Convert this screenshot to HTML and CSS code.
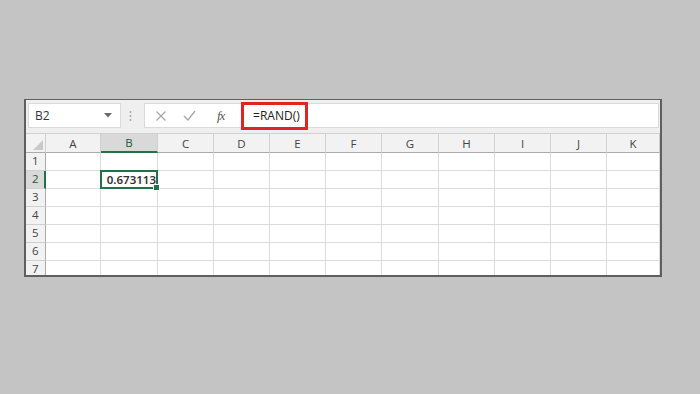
FILE: index.html
```html
<!DOCTYPE html>
<html lang="en">
<head>
    <meta charset="UTF-8">
    <title>RAND</title>
    <link rel="stylesheet" href="styles.css">
</head>
<body>
    <div class="window">
        <div class="toolbar">
            <div class="name-box">
                <span>B2</span>
                <svg class="arrow" width="8" height="5" viewBox="0 0 8 5"><path d="M0 0h8L4 4.5z" fill="#6a6a6a"/></svg>
            </div>
            <div class="dots">
                <svg width="3" height="12" viewBox="0 0 3 12"><circle cx="1.5" cy="2" r="0.9" fill="#a0a0a0"/><circle cx="1.5" cy="6" r="0.9" fill="#a0a0a0"/><circle cx="1.5" cy="10" r="0.9" fill="#a0a0a0"/></svg>
            </div>
            <div class="formula-box">
                <svg class="btn-x" width="12" height="12" viewBox="0 0 12 12"><path d="M1.5 1.5l9 9M10.5 1.5l-9 9" stroke="#a8a8a8" stroke-width="1.3"/></svg>
                <svg class="btn-ok" width="13" height="11" viewBox="0 0 13 11"><path d="M1 6l4 4L12 1" stroke="#a8a8a8" stroke-width="1.4" fill="none"/></svg>
                <span class="fx">fx</span>
                <span class="formula">=RAND()</span>
            </div>
        </div>

        <div class="sheet">
            <div class="corner">
                <svg width="10" height="10" viewBox="0 0 10 10"><path d="M10 0v10H0z" fill="#c9c9c9"/></svg>
            </div>
            <div class="col-head">A</div>
            <div class="col-head active">B</div>
            <div class="col-head">C</div>
            <div class="col-head">D</div>
            <div class="col-head">E</div>
            <div class="col-head">F</div>
            <div class="col-head">G</div>
            <div class="col-head">H</div>
            <div class="col-head">I</div>
            <div class="col-head">J</div>
            <div class="col-head">K</div>
        </div>
        <div class="rows" id="rows"></div>
    </div>

    <script>
        const rowsElem = document.getElementById('rows');

        // build rows 1..7, B2 holds the value
        for (let r = 1; r <= 7; r++) {
            const rowHead = document.createElement('div');
            rowHead.className = 'row-head' + (r === 2 ? ' active' : '');
            rowHead.textContent = r;
            rowsElem.appendChild(rowHead);

            for (let c = 0; c < 11; c++) {
                const cell = document.createElement('div');
                cell.className = 'cell';
                if (r === 2 && c === 1) {
                    cell.classList.add('selected');
                    cell.textContent = '0.673113';
                }
                rowsElem.appendChild(cell);
            }
        }
    </script>
</body>
</html>
```

FILE: styles.css
```css
body {
    margin: 0;
    background-color: #c4c4c4;
    font-family: "Open Sans", "Noto Sans", sans-serif;
}

.window {
    margin: 99px 0 0 24px;
    width: 638px;
    height: 178px;
    box-sizing: border-box;
    border: 2px solid #5f5f5f;
    border-top-width: 1px;
    background-color: #fff;
    overflow: hidden;
}

.toolbar {
    height: 33px;
    box-sizing: border-box;
    padding: 3px 1px 5px 2px;
    background-color: #efefef;
    display: flex;
    align-items: stretch;
}

.name-box {
    width: 93px;
    box-sizing: border-box;
    background-color: #fff;
    border: 1px solid #dadada;
    display: flex;
    align-items: center;
    justify-content: space-between;
    padding: 0 8px 0 6px;
    font-size: 12px;
    color: #333;
}

.dots {
    width: 23px;
    box-sizing: border-box;
    padding-left: 8px;
    display: flex;
    align-items: center;
}

.formula-box {
    flex: 1;
    background-color: #fff;
    border: 1px solid #dadada;
    display: flex;
    align-items: center;
    padding-left: 10px;
}

.btn-ok {
    margin-left: 16px;
}

.fx {
    margin-left: 21px;
    font-family: "Liberation Serif", serif;
    font-style: italic;
    font-size: 13px;
    color: #555;
    letter-spacing: -1px;
}

.formula {
    margin-left: 17px;
    height: 28px;
    width: 67px;
    box-sizing: border-box;
    border: 3px solid #e02424;
    display: flex;
    align-items: center;
    justify-content: center;
    padding-left: 3px;
    font-size: 12px;
    color: #222;
}

.sheet,
.rows {
    display: grid;
    grid-template-columns: 20px 55px 57px 56px 56px 56px 56px 57px 56px 56px 56px 53px;
}

.sheet {
    height: 20px;
    border-top: 1px solid #d0d0d0;
    box-sizing: border-box;
}

.corner,
.col-head,
.row-head {
    background-color: #f2f2f2;
    border-right: 1px solid #d0d0d0;
    border-bottom: 1px solid #ababab;
    box-sizing: border-box;
    font-size: 11.5px;
    color: #444;
    display: flex;
    align-items: center;
    justify-content: center;
}

.corner {
    align-items: flex-end;
    justify-content: flex-end;
    padding: 0 2px 2px 0;
}

.col-head.active {
    background-color: #d9d9d9;
    border-bottom: 2px solid #217346;
    color: #215732;
}

.rows {
    grid-auto-rows: 18px;
}

.row-head {
    border-bottom: 1px solid #d0d0d0;
    border-right: 1px solid #ababab;
    align-items: flex-start;
    justify-content: flex-start;
    padding-left: 6px;
    line-height: 16px;
}

.row-head.active {
    background-color: #d9d9d9;
    border-right: 2px solid #217346;
    color: #215732;
}

.cell {
    border-right: 1px solid #dcdcdc;
    border-bottom: 1px solid #dcdcdc;
    box-sizing: border-box;
}

.cell.selected {
    position: relative;
    border: 2px solid #217346;
    margin: -1px 0 0 -1px;
    font-family: "Noto Sans", sans-serif;
    font-size: 11.5px;
    font-weight: 600;
    color: #333;
    display: flex;
    align-items: center;
    justify-content: flex-end;
    padding-right: 0;
}

.cell.selected::after {
    content: "";
    position: absolute;
    right: -4px;
    bottom: -4px;
    width: 5px;
    height: 5px;
    background-color: #217346;
    border: 1px solid #fff;
}
```
